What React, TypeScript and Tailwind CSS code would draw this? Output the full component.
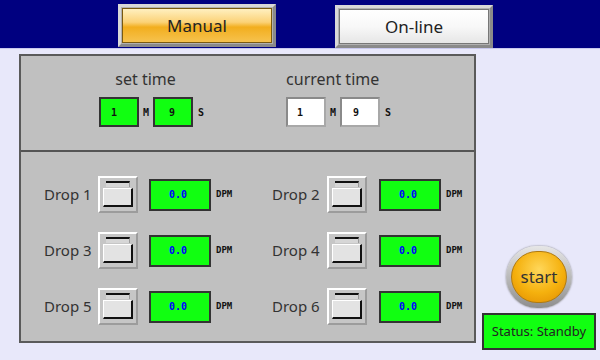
import React from 'react';

const SANS = "font-['Noto_Sans','Open_Sans',sans-serif]";
const MONO = "font-['DejaVu_Sans_Mono','Liberation_Mono',monospace] font-bold";

const TimeBox: React.FC<{ value: string; green?: boolean; pad: string }> = ({ value, green, pad }) => (
  <div
    className={`w-[40px] h-[30px] flex items-center ${pad} text-[10px] text-[#111] ${MONO} ${
      green
        ? 'bg-[#11ff11] border-2 border-[#333]'
        : 'bg-white border-2 border-t-[#8a8a8a] border-l-[#8a8a8a] border-b-[#a8a8a8] border-r-[#a8a8a8]'
    }`}
  >
    {value}
  </div>
);

const TimeGroup: React.FC<{ label: string; green?: boolean; shift: string }> = ({ label, green, shift }) => (
  <div className="flex flex-col">
    <div className={`h-[20px] leading-[20px] text-[16px] text-[#333] text-center ${shift} ${SANS}`}>{label}</div>
    <div className="flex items-center mt-[8px]">
      <TimeBox value="1" green={green} pad={green ? 'pl-[10px]' : 'pl-[9px]'} />
      <span className={`mx-[4px] text-[10px] text-[#111] ${MONO}`}>M</span>
      <TimeBox value="9" green={green} pad={green ? 'pl-[14px]' : 'pl-[11px]'} />
      <span className={`ml-[5px] text-[10px] text-[#111] ${MONO}`}>S</span>
    </div>
  </div>
);

const PushButton = () => (
  <div className="w-[40px] h-[37px] bg-[#c6c6c6] border-2 border-t-white border-l-white border-b-[#9c9c9c] border-r-[#9c9c9c] flex flex-col px-[3px] pt-[3px]">
    <div className="h-[6px] mx-[3px] bg-[#d6d6d6] border-t-2 border-t-[#111] border-r border-r-[#9a9a9a]" />
    <div className="mt-[1px] h-[19px] bg-[#e3e3e3] border-t border-l border-t-white border-l-white border-b-2 border-r-2 border-b-[#111] border-r-[#111]" />
  </div>
);

const DropRow: React.FC<{ n: number; labelW: string; gap: string }> = ({ n, labelW, gap }) => (
  <div className="flex items-center h-[37px]">
    <div className={`${labelW} text-[15px] text-[#333] ${SANS}`}>Drop {n}</div>
    <PushButton />
    <div
      className={`${gap} w-[62px] h-[32px] bg-[#11ff11] border-2 border-[#333] flex items-center pl-[18px] text-[10px] text-[#0000ff] ${MONO}`}
    >
      0.0
    </div>
    <span className={`ml-[5px] text-[9px] text-[#111] ${MONO}`}>DPM</span>
  </div>
);

export default function App() {
  return (
    <div className="w-[600px] h-[360px] bg-[#e8e8fa] flex flex-col overflow-hidden">
      {/* header */}
      <div className="h-[49px] bg-[#000080] border-b border-b-[#c8c8ee] flex items-start pl-[118px] gap-[59px]">
        <div className="mt-[4px] w-[158px] h-[43px] border-[3px] border-t-[#d8d8d8] border-l-[#d8d8d8] border-b-[#8a8a8a] border-r-[#8a8a8a] bg-[#b0b0b0] p-[1px]">
          <div className={`w-full h-full border border-[#7a5a10] bg-[linear-gradient(#fff0c0_0%,#fbd277_40%,#f2ae1e_55%,#f6c24e_100%)] flex items-center justify-center text-[17px] text-[#222] ${SANS}`}>
            Manual
          </div>
        </div>
        <div className="mt-[5px] w-[158px] h-[43px] border-[3px] border-t-[#d8d8d8] border-l-[#d8d8d8] border-b-[#8a8a8a] border-r-[#8a8a8a] bg-[#b0b0b0] p-[1px]">
          <div className={`w-full h-full border border-[#777] bg-[linear-gradient(#ffffff_0%,#f8f8f8_50%,#e6e6e6_100%)] flex items-center justify-center text-[17px] text-[#222] ${SANS}`}>
            On-line
          </div>
        </div>
      </div>

      <div className="flex flex-1">
        {/* main panel */}
        <div className="ml-[19px] mt-[5px] w-[457px] h-[289px] bg-[#c0c0c0] border-2 border-[#5a5a5a] flex flex-col">
          <div className="h-[94px] flex pl-[78px] pt-[13px] gap-[82px]">
            <TimeGroup label="set time" green shift="mr-[12px]" />
            <TimeGroup label="current time" shift="mr-[16px]" />
          </div>
          <div className="h-[2px] bg-[#555]" />
          <div className="grid grid-cols-[228px_228px] pl-[23px] pt-[24px] gap-y-[19px]">
            <DropRow n={1} labelW="w-[54px]" gap="ml-[11px]" />
            <DropRow n={2} labelW="w-[55px]" gap="ml-[12px]" />
            <DropRow n={3} labelW="w-[54px]" gap="ml-[11px]" />
            <DropRow n={4} labelW="w-[55px]" gap="ml-[12px]" />
            <DropRow n={5} labelW="w-[54px]" gap="ml-[11px]" />
            <DropRow n={6} labelW="w-[55px]" gap="ml-[12px]" />
          </div>
        </div>

        {/* right side */}
        <div className="flex-1 flex flex-col items-center justify-end pb-[10px] pl-[2px]">
          <div className="w-[66px] h-[62px] rounded-full bg-[linear-gradient(#e6e6e6,#8e8e8e)] p-[5px] shadow-[0_0_2px_#777]">
            <div className={`w-full h-full rounded-full bg-[radial-gradient(circle_at_50%_35%,#ffd75a_0%,#f5b10e_55%,#e08a00_100%)] border border-[#b07a10] flex items-center justify-center text-[17px] text-[#333] ${SANS}`}>
              start
            </div>
          </div>
          <div className={`mt-[5px] w-[114px] h-[37px] bg-[#11ff11] border-2 border-[#333] flex items-center justify-center text-[13px] text-[#222] ${SANS}`}>
            Status: Standby
          </div>
        </div>
      </div>
    </div>
  );
}
